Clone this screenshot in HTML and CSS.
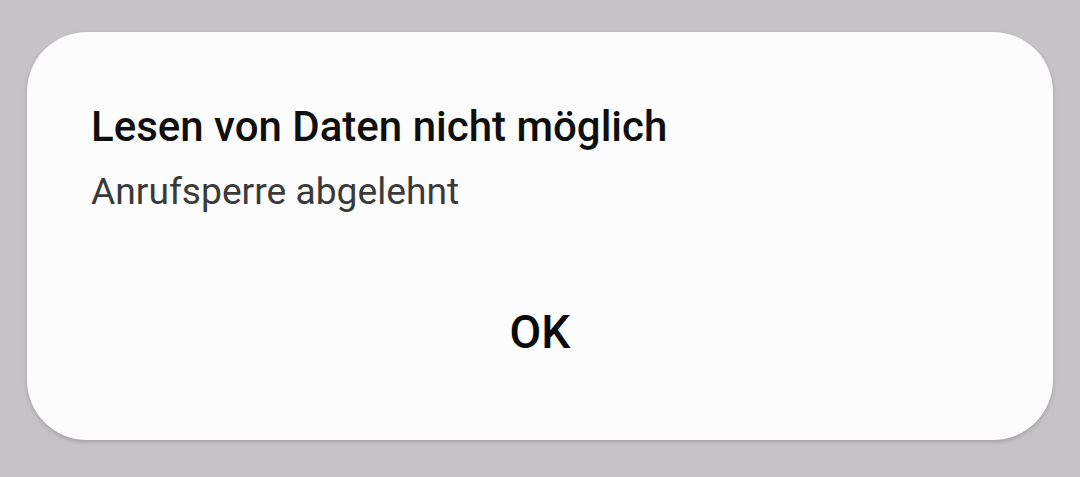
FILE: index.html
```html
<!DOCTYPE html>
<html lang="de">
<head>
<meta charset="utf-8">
<link rel="stylesheet" href="styles.css">
</head>
<body>
<div class="screen">
  <div class="dialog">
    <div class="title">Lesen von Daten nicht möglich</div>
    <div class="message">Anrufsperre abgelehnt</div>
    <div class="actions">
      <button class="ok">OK</button>
    </div>
  </div>
</div>
</body>
</html>
```
FILE: styles.css
```css
html, body {
  margin: 0;
  padding: 0;
  width: 1080px;
  height: 477px;
  background: #c5c3c6;
  overflow: hidden;
}
.screen {
  padding: 32px 27px 0 27px;
  font-family: Roboto, "Noto Sans", sans-serif;
}
.dialog {
  box-sizing: border-box;
  height: 408px;
  background: #fcfcfc;
  border-radius: 60px;
  box-shadow: 0 2px 4px rgba(0,0,0,0.18);
  padding: 70px 64px 0 64px;
  display: flex;
  flex-direction: column;
}
.title {
  font-size: 42px;
  font-weight: 500;
  color: #0f0f0f;
  line-height: 50px;
}
.message {
  font-size: 37.2px;
  color: #3a3a3a;
  line-height: 44px;
  margin-top: 17px;
}
.actions {
  display: flex;
  justify-content: center;
  margin-top: 92px;
}
.ok {
  font-family: inherit;
  font-size: 46px;
  font-weight: 500;
  color: #0a0a0a;
  background: none;
  border: none;
  padding: 0;
  line-height: 54px;
}
```
